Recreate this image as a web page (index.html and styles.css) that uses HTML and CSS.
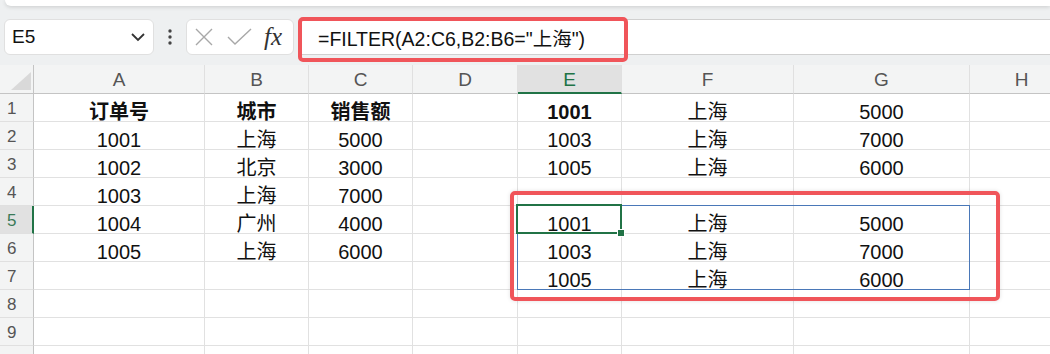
FILE: index.html
```html
<!DOCTYPE html>
<html lang="zh-CN">
<head>
    <meta charset="UTF-8">
    <meta name="viewport" content="width=device-width, initial-scale=1.0">
    <title>FILTER</title>
    <link rel="stylesheet" href="styles.css">
</head>
<body>
    <div class="ribbon-edge"></div>

    <div class="formula-row">
        <div class="name-box">
            <span>E5</span>
            <svg class="chevron" width="16" height="10" viewBox="0 0 16 10"><path d="M2 2 L8 8 L14 2" fill="none" stroke="#333" stroke-width="1.8"/></svg>
        </div>
        <div class="dots">
            <svg width="6" height="20" viewBox="0 0 6 20"><circle cx="3" cy="4" r="1.7" fill="#444"/><circle cx="3" cy="10" r="1.7" fill="#444"/><circle cx="3" cy="16" r="1.7" fill="#444"/></svg>
        </div>
        <div class="fx-box">
            <svg width="20" height="20" viewBox="0 0 20 20"><path d="M2 2 L18 18 M18 2 L2 18" stroke="#a8a8a8" stroke-width="1.4" fill="none"/></svg>
            <svg width="26" height="18" viewBox="0 0 26 18"><path d="M1 9 L8 16 L24 1" stroke="#a8a8a8" stroke-width="1.4" fill="none"/></svg>
            <span class="fx">fx</span>
        </div>
        <div class="formula-bar">
            <span class="formula-text">=FILTER(A2:C6,B2:B6="上海")</span>
            <div class="mark mark-formula"></div>
        </div>
    </div>

    <div class="sheet">
        <div class="grid">
            <div class="hd corner"><div class="corner-tri"></div></div>
            <div class="hd col">A</div>
            <div class="hd col">B</div>
            <div class="hd col">C</div>
            <div class="hd col">D</div>
            <div class="hd col sel">E</div>
            <div class="hd col">F</div>
            <div class="hd col">G</div>
            <div class="hd col">H</div>

            <div class="hd row">1</div>
            <div class="c b">订单号</div><div class="c b">城市</div><div class="c b">销售额</div><div class="c"></div>
            <div class="c b">1001</div><div class="c">上海</div><div class="c">5000</div><div class="c"></div>

            <div class="hd row">2</div>
            <div class="c">1001</div><div class="c">上海</div><div class="c">5000</div><div class="c"></div>
            <div class="c">1003</div><div class="c">上海</div><div class="c">7000</div><div class="c"></div>

            <div class="hd row">3</div>
            <div class="c">1002</div><div class="c">北京</div><div class="c">3000</div><div class="c"></div>
            <div class="c">1005</div><div class="c">上海</div><div class="c">6000</div><div class="c"></div>

            <div class="hd row">4</div>
            <div class="c">1003</div><div class="c">上海</div><div class="c">7000</div><div class="c"></div>
            <div class="c"></div><div class="c"></div><div class="c"></div><div class="c"></div>

            <div class="hd row sel">5</div>
            <div class="c">1004</div><div class="c">广州</div><div class="c">4000</div><div class="c"></div>
            <div class="c">1001</div><div class="c">上海</div><div class="c">5000</div><div class="c"></div>

            <div class="hd row">6</div>
            <div class="c">1005</div><div class="c">上海</div><div class="c">6000</div><div class="c"></div>
            <div class="c">1003</div><div class="c">上海</div><div class="c">7000</div><div class="c"></div>

            <div class="hd row">7</div>
            <div class="c"></div><div class="c"></div><div class="c"></div><div class="c"></div>
            <div class="c">1005</div><div class="c">上海</div><div class="c">6000</div><div class="c"></div>

            <div class="hd row">8</div>
            <div class="c"></div><div class="c"></div><div class="c"></div><div class="c"></div>
            <div class="c"></div><div class="c"></div><div class="c"></div><div class="c"></div>

            <div class="hd row">9</div>
            <div class="c"></div><div class="c"></div><div class="c"></div><div class="c"></div>
            <div class="c"></div><div class="c"></div><div class="c"></div><div class="c"></div>

            <div class="hd row"></div>
            <div class="c"></div><div class="c"></div><div class="c"></div><div class="c"></div>
            <div class="c"></div><div class="c"></div><div class="c"></div><div class="c"></div>
        </div>

        <!-- spill range, active cell and annotation drawn over the grid -->
        <div class="spill"></div>
        <div class="active-cell"><span class="fill-handle"></span></div>
        <div class="mark mark-result"></div>
    </div>
</body>
</html>
```

FILE: styles.css
```css
body {
    margin: 0;
    width: 1050px;
    height: 354px;
    overflow: hidden;
    background-color: #eef0f1;
    font-family: "Liberation Sans", "Noto Sans CJK SC", sans-serif;
    color: #111;
}
.ribbon-edge {
    height: 6px;
    margin-left: 5px;
    background-color: white;
    border-radius: 0 0 0 8px;
    box-shadow: 0 1px 4px rgba(0,0,0,0.15);
}
.formula-row {
    display: flex;
    align-items: center;
    height: 36px;
    margin-top: 13px;
    padding-left: 4px;
}
.name-box {
    display: flex;
    align-items: center;
    justify-content: space-between;
    box-sizing: border-box;
    width: 150px;
    height: 36px;
    padding: 0 7px 0 7px;
    background-color: white;
    border: 1px solid #e0e0e0;
    border-radius: 6px;
    font-size: 19px;
}
.dots {
    display: flex;
    justify-content: center;
    width: 32px;
}
.fx-box {
    display: flex;
    align-items: center;
    box-sizing: border-box;
    width: 108px;
    height: 36px;
    padding-left: 7px;
    gap: 13px;
    background-color: white;
    border: 1px solid #e0e0e0;
    border-radius: 6px;
}
.fx {
    font-family: "Liberation Serif", serif;
    font-style: italic;
    font-size: 25px;
    color: #333;
    margin-left: -2px;
}
.formula-bar {
    position: relative;
    flex: 1;
    display: flex;
    align-items: center;
    box-sizing: border-box;
    height: 36px;
    margin-left: 6px;
    padding-left: 18px;
    background-color: white;
    border-top: 1px solid #d0d0d0;
    border-bottom: 1px solid #d0d0d0;
    font-size: 19.5px;
}
.mark {
    position: absolute;
    box-sizing: border-box;
    border: 4px solid #f0555a;
    border-radius: 5px;
}
.mark-formula {
    left: -2px;
    top: -3px;
    width: 330px;
    height: 45px;
}
.sheet {
    position: relative;
    margin-top: 10px;
}
.grid {
    display: grid;
    grid-template-columns: 34px 171px 104px 104px 105px 104px 172px 176px 104px;
    grid-template-rows: 29px;
    grid-auto-rows: 28px;
    background-color: white;
}
.c {
    display: flex;
    align-items: flex-end;
    justify-content: center;
    box-sizing: border-box;
    border-right: 1px solid #e1e1e1;
    border-bottom: 1px solid #e1e1e1;
    font-size: 20px;
    line-height: 18px;
    white-space: nowrap;
}
.c.b {
    font-weight: bold;
}
.hd {
    display: flex;
    align-items: flex-end;
    box-sizing: border-box;
    background-color: #f3f4f4;
    color: #555;
    line-height: 18px;
}
.hd.col {
    justify-content: center;
    font-size: 19px;
    padding-bottom: 4px;
    border-right: 1px solid #e0e0e0;
    border-bottom: 1px solid #c4c4c4;
}
.hd.row {
    padding: 0 0 3px 7px;
    font-size: 17px;
    border-right: 1px solid #c4c4c4;
    border-bottom: 1px solid #e0e0e0;
}
.hd.col.sel {
    background-color: #e1e1e1;
    color: #217346;
    border-bottom: 2px solid #217346;
    padding-bottom: 3px;
}
.hd.row.sel {
    background-color: #e1e1e1;
    color: #3a7a58;
    border-right: 2px solid #217346;
}
.corner {
    position: relative;
    border-right: 1px solid #c4c4c4;
    border-bottom: 1px solid #c4c4c4;
}
.corner-tri {
    position: absolute;
    right: 2px;
    bottom: 3px;
    width: 20px;
    height: 18px;
    background-color: #d9d9d9;
    clip-path: polygon(100% 0, 100% 100%, 0 100%);
}
.spill {
    position: absolute;
    left: 517px;
    top: 140px;
    width: 453px;
    height: 85px;
    box-sizing: border-box;
    border: 1px solid #4a78b8;
}
.active-cell {
    position: absolute;
    left: 516px;
    top: 139px;
    width: 106px;
    height: 30px;
    box-sizing: border-box;
    border: 2px solid #217346;
}
.fill-handle {
    position: absolute;
    right: -5px;
    bottom: -5px;
    width: 6px;
    height: 6px;
    background-color: #217346;
    border: 1px solid white;
}
.mark-result {
    left: 510px;
    top: 126px;
    width: 490px;
    height: 110px;
    box-shadow: 0 0 4px rgba(0,0,0,0.12);
}
```
